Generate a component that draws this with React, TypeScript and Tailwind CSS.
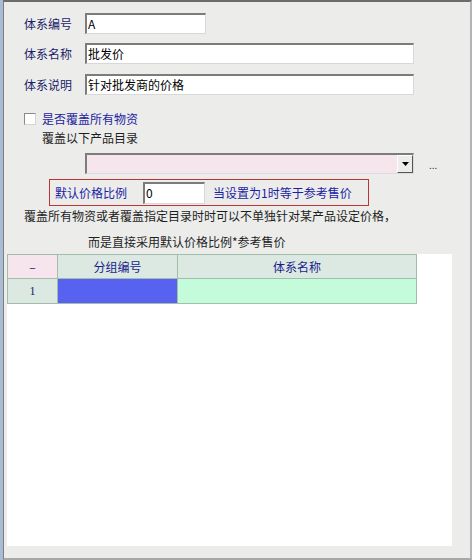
import React from 'react'

const font = { fontFamily: '"Noto Sans CJK SC", "Liberation Sans", sans-serif' }

// classic sunken edit box
const Edit = ({ value, className }: { value: string; className: string }) => (
  <div
    className={
      'h-[21px] bg-white border-t-2 border-l-2 border-t-[#7c7c7c] border-l-[#7c7c7c] border-b border-r border-b-[#d8d8d8] border-r-[#d8d8d8] pl-[1px] flex items-center text-[12px] text-black leading-none ' +
      className
    }
  >
    {value}
  </div>
)

const Row = ({ label, value, width }: { label: string; value: string; width: string }) => (
  <div className="flex items-center h-[21px]">
    <span className="w-[61px] text-[12px] text-[#1c1c68] leading-none">{label}</span>
    <Edit value={value} className={width} />
  </div>
)

export default function App() {
  return (
    <div
      style={font}
      className="w-[472px] h-[560px] bg-[#a8bcd4] pl-[3px] overflow-hidden"
    >
      <div className="w-full h-full bg-[#ecedeb] border-l border-l-[#7e7e7e] border-t-2 border-t-[#6c6c6c] border-r-2 border-r-[#b4b4b4] border-b-2 border-b-[#a8a8a8] flex flex-col">
        <div className="pl-[20px] pt-[11px] flex flex-col">
          <Row label="体系编号" value="A" width="w-[121px]" />
          <div className="mt-[9px]">
            <Row label="体系名称" value="批发价" width="w-[329px]" />
          </div>
          <div className="mt-[10px]">
            <Row label="体系说明" value="针对批发商的价格" width="w-[329px]" />
          </div>

          <div className="mt-[17px] flex items-center h-[13px]">
            <div className="w-[12px] h-[12px] bg-white border border-[#8a8a8a] border-b-[#d4d4d4] border-r-[#d4d4d4]" />
            <span className="ml-[6px] text-[12px] text-[#1c1ca0] leading-none">是否覆盖所有物资</span>
          </div>
          <div className="mt-[6px] ml-[18px] text-[12px] text-[#1e1e1e] leading-[14px]">覆盖以下产品目录</div>

          <div className="mt-[8px] ml-[61px] flex items-center">
            <div className="w-[329px] h-[21px] bg-[#f7e5ed] border-t-2 border-l-2 border-t-[#7c7c7c] border-l-[#7c7c7c] border-b border-r border-b-[#dcdcdc] border-r-[#dcdcdc] flex justify-end items-start">
              <div className="w-[16px] h-[18px] bg-[#ecedeb] border border-t-white border-l-white border-b-[#555] border-r-[#555] flex items-center justify-center">
                <svg width="7" height="4" viewBox="0 0 7 4">
                  <path d="M0 0h7L3.5 4z" fill="#000" />
                </svg>
              </div>
            </div>
            <span className="ml-[15px] text-[10px] text-[#333] leading-none mt-[2px]">...</span>
          </div>

          <div className="mt-[5px] ml-[25px] w-[320px] h-[27px] border border-[#bc3434] flex items-center pl-[5px]">
            <span className="w-[88px] text-[12px] text-[#1c1ca4] leading-none">默认价格比例</span>
            <Edit value="0" className="w-[62px] h-[22px]" />
            <span className="ml-[8px] text-[12px] text-[#1c1ca4] leading-none">当设置为1时等于参考售价</span>
          </div>

          <div className="mt-0 text-[12px] text-[#1e1e1e] leading-[20px]">
            覆盖所有物资或者覆盖指定目录时时可以不单独针对某产品设定价格，
          </div>
          <div className="mt-[6px] ml-[64px] text-[12px] text-[#1e1e1e] leading-[20px]">
            而是直接采用默认价格比例*参考售价
          </div>
        </div>

        <div className="mt-[2px] ml-[3px] w-[445px] h-[292px] bg-white">
          <table className="border-collapse text-[12px] leading-none">
            <tbody>
              <tr className="h-[24px]">
                <td className="w-[50px] border border-[#a2bea8] bg-[#f7e5ed] text-center text-[#1c1c68]">–</td>
                <td className="w-[120px] border border-[#a2bea8] bg-[#dbe9e2] text-center text-[#1c1c8c]">分组编号</td>
                <td className="w-[239px] border border-[#a2bea8] bg-[#dbe9e2] text-center text-[#1c1c8c]">体系名称</td>
              </tr>
              <tr className="h-[25px]">
                <td className="border border-[#a2bea8] bg-[#dbe9e2] text-center text-[#1c1c68]" style={{ fontFamily: '"Liberation Serif", serif' }}>1</td>
                <td className="border border-[#a2bea8] bg-[#5763f0]"></td>
                <td className="border border-[#a2bea8] bg-[#c3fbdb]"></td>
              </tr>
            </tbody>
          </table>
        </div>
      </div>
    </div>
  )
}
